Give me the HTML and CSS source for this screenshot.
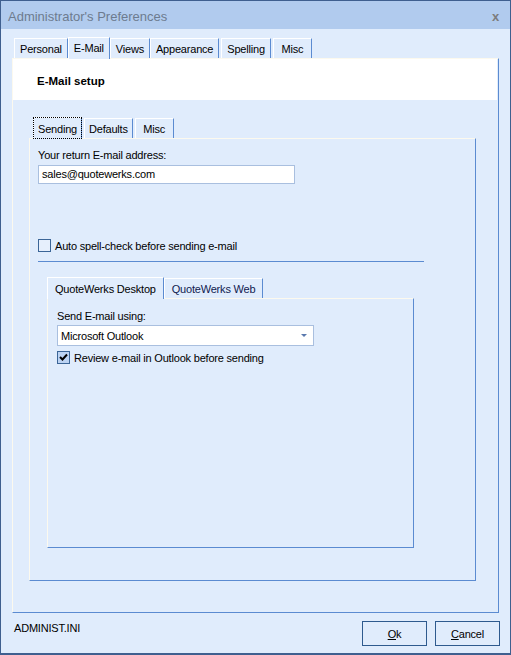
FILE: index.html
```html
<!DOCTYPE html>
<html>
<head lang="en">
    <meta charset="UTF-8">
    <title>Administrator's Preferences</title>
    <link rel="stylesheet" href="styles.css">
</head>
<body>
<div class="window">
    <div class="titlebar">
        <span class="title">Administrator's Preferences</span>
        <span class="close">x</span>
    </div>
    <div class="content">
        <!-- top tabs -->
        <div class="tabs tabs-top">
            <div class="tab">Personal</div>
            <div class="tab active">E-Mail</div>
            <div class="tab">Views</div>
            <div class="tab">Appearance</div>
            <div class="tab tab-gap">Spelling</div>
            <div class="tab tab-gap">Misc</div>
        </div>
        <div class="panel panel-main">
            <div class="header">E-Mail setup</div>

            <div class="tabs tabs-mid">
                <div class="tab active focus">Sending</div>
                <div class="tab tab-gap">Defaults</div>
                <div class="tab tab-gap">Misc</div>
            </div>
            <div class="panel panel-mid">
                <div class="label">Your return E-mail address:</div>
                <div class="input">sales@quotewerks.com</div>

                <label class="check check-spell">
                    <span class="box"></span>
                    Auto spell-check before sending e-mail
                </label>
                <div class="rule"></div>

                <div class="tabs tabs-inner">
                    <div class="tab active">QuoteWerks Desktop</div>
                    <div class="tab dark">QuoteWerks Web</div>
                </div>
                <div class="panel panel-inner">
                    <div class="label">Send E-mail using:</div>
                    <div class="combo">
                        <span>Microsoft Outlook</span>
                        <span class="arrow"></span>
                    </div>
                    <label class="check check-review">
                        <span class="box checked">
                            <svg width="9" height="9" viewBox="0 0 9 9">
                                <path d="M1 4 L3.5 6.5 L8 1.5" fill="none" stroke="#000" stroke-width="2"/>
                            </svg>
                        </span>
                        Review e-mail in Outlook before sending
                    </label>
                </div>
            </div>
        </div>

        <div class="footer">
            <span class="ini">ADMINIST.INI</span>
            <div class="buttons">
                <div class="btn"><u>O</u>k</div>
                <div class="btn"><u>C</u>ancel</div>
            </div>
        </div>
    </div>
</div>
</body>
</html>
```

FILE: styles.css
```css
*{
    margin: 0;
    padding: 0;
    box-sizing: border-box;
}
body {
    font: 11px "Liberation Sans", Arial, sans-serif;
    letter-spacing: -0.2px;
    color: #000;
    background: #e0ecfc;
}
.window {
    width: 511px;
    height: 655px;
    border: 1px solid #3f5f8f;
    border-bottom-width: 2px;
    background: #e0ecfc;
    display: flex;
    flex-direction: column;
}
.titlebar {
    height: 28px;
    background: #b1cbee;
    display: flex;
    align-items: center;
    justify-content: space-between;
    padding: 2px 11px 0 7px;
}
.title {
    font-size: 13px;
    letter-spacing: 0;
    color: #6d7b8f;
}
.close {
    font: bold 13px "Liberation Sans", Arial, sans-serif;
    color: #7c7c7c;
}
.content {
    flex: 1;
    padding: 8px 0 0 11px;
}

/* tabs */
.tabs {
    display: flex;
    align-items: flex-end;
}
.tab {
    height: 20px;
    min-width: 39px;
    padding: 0 5px;
    display: flex;
    align-items: center;
    justify-content: center;
    border-top: 1px solid #fff;
    border-left: 1px solid #fff;
    border-right: 1px solid #5b8bd1;
    white-space: nowrap;
}
.tab.active {
    height: 22px;
    padding-bottom: 2px;
    position: relative;
    margin-bottom: -1px;
    z-index: 1;
    background: #e0ecfc;
}
.tab.focus {
    outline: 1px dotted #000;
    outline-offset: -1px;
}
.tab.dark {
    color: #102050;
}
.tabs-top {
    padding-left: 2px;
}
.tab-gap {
    margin-left: 2px;
}
.tabs-mid {
    margin: 17px 0 0 20px;
}
.tabs-mid .tab {
    padding: 0 4px;
}
.tabs-inner {
    margin: 15px 0 0 9px;
}
.tabs-inner .tab {
    padding: 0 7px;
}

.panel {
    border-top: 1px solid #fcf9ee;
    border-left: 1px solid #fcf9ee;
    border-right: 1px solid #5b8bd1;
    border-bottom: 1px solid #5b8bd1;
}
.panel-main {
    width: 487px;
    height: 555px;
    padding-right: 1px;
}
.header {
    height: 41px;
    background: #fff;
    font-weight: bold;
    font-size: 11.5px;
    letter-spacing: 0;
    padding: 16px 0 0 24px;
}
.panel-mid {
    width: 447px;
    height: 443px;
    margin-left: 16px;
    padding: 9px 0 0 8px;
}
.label {
    height: 14px;
    line-height: 14px;
}
.input {
    width: 257px;
    height: 19px;
    margin-top: 3px;
    border: 1px solid #a9bfdf;
    background: #fff;
    padding: 2px 0 0 3px;
}
.check {
    display: flex;
    align-items: center;
    gap: 4px;
    height: 13px;
}
.check-spell {
    margin-top: 55px;
}
.box {
    width: 13px;
    height: 13px;
    border: 1px solid #3b6597;
    background: #e6effc;
    display: flex;
    align-items: center;
    justify-content: center;
}
.box.checked {
    background: #bcd3f3;
}
.rule {
    width: 386px;
    height: 1px;
    margin-top: 9px;
    background: #5b8bd1;
}
.panel-inner {
    width: 367px;
    height: 250px;
    margin-left: 9px;
    padding: 10px 0 0 9px;
}
.combo {
    width: 257px;
    height: 21px;
    margin-top: 2px;
    border: 1px solid #a9bfdf;
    background: #fff;
    display: flex;
    align-items: center;
    justify-content: space-between;
    padding: 0 6px 0 3px;
}
.arrow {
    width: 0;
    height: 0;
    border-left: 3px solid transparent;
    border-right: 3px solid transparent;
    border-top: 3px solid #5a79ae;
}
.check-review {
    margin-top: 5px;
}

/* footer */
.footer {
    display: flex;
    justify-content: space-between;
    align-items: flex-start;
    padding: 8px 10px 0 2px;
}
.ini {
    margin-top: 1px;
}
.buttons {
    display: flex;
    gap: 8px;
}
.btn {
    width: 65px;
    height: 25px;
    border: 1px solid #2e5a8e;
    display: flex;
    align-items: center;
    justify-content: center;
}
```
